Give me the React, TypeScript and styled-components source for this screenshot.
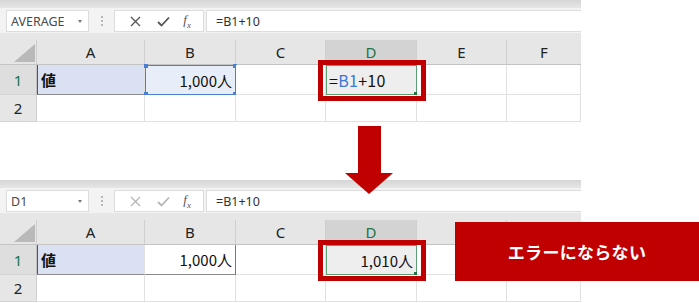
import React from 'react';
import styled, { createGlobalStyle } from 'styled-components';

const GlobalStyle = createGlobalStyle`
  html, body {
    margin: 0;
    padding: 0;
    background: #fff;
  }
  body {
    font-family: 'Noto Sans CJK JP', 'Liberation Sans', sans-serif;
  }
  * {
    box-sizing: border-box;
  }
`;

const Page = styled.div`
  position: relative;
  width: 699px;
  height: 303px;
  overflow: hidden;
  display: flex;
  flex-direction: column;
  gap: 58px;
`;

const Sheet = styled.div`
  width: 581px;
  display: flex;
  flex-direction: column;
`;

const TopBand = styled.div`
  height: 8px;
  background: linear-gradient(#d6d6d6, #e6e6e6);
`;

const FormulaRow = styled.div`
  height: 25px;
  background: #f3f3f3;
  display: flex;
  align-items: flex-start;
  padding-top: 2px;
`;

const NameBox = styled.div`
  margin-left: 6px;
  width: 83px;
  height: 22px;
  background: #fff;
  border: 1px solid #dcdcdc;
  display: flex;
  align-items: center;
  padding-left: 4px;
  font-family: 'Noto Sans', 'Liberation Sans', sans-serif;
  font-size: 12.5px;
  color: #4a4a4a;
  position: relative;
`;

const DropArrow = styled.span`
  position: absolute;
  right: 6px;
  top: 9px;
  width: 0;
  height: 0;
  border-left: 2.5px solid transparent;
  border-right: 2.5px solid transparent;
  border-top: 3px solid #777;
`;

const Grip = styled.div`
  width: 25px;
  height: 22px;
  display: flex;
  flex-direction: column;
  align-items: center;
  justify-content: center;
  gap: 2px;
  span {
    width: 2px;
    height: 2px;
    background: #b8b8b8;
  }
`;

const ButtonsBox = styled.div`
  width: 90px;
  height: 22px;
  background: #fff;
  border: 1px solid #dcdcdc;
  display: flex;
  align-items: center;
  justify-content: space-around;
  padding: 0 6px;
`;

const IconBtn = styled.span<{ $dim?: boolean }>`
  width: 16px;
  display: flex;
  justify-content: center;
  color: ${p => (p.$dim ? '#b5b5b5' : '#555')};
`;

const Fx = styled.span`
  font-family: 'Liberation Serif', serif;
  font-style: italic;
  font-size: 13px;
  color: #555;
  sub {
    font-size: 9px;
  }
`;

const FormulaInput = styled.div`
  margin-left: 2px;
  flex: 1;
  height: 22px;
  background: #fff;
  border: 1px solid #dcdcdc;
  border-right: none;
  display: flex;
  align-items: center;
  padding-left: 9px;
  font-family: 'Noto Sans', 'Liberation Sans', sans-serif;
  font-size: 12.5px;
  color: #333;
`;

const HeaderGap = styled.div`
  height: 7px;
  background: #e6e6e6;
`;

const Grid = styled.div`
  display: grid;
  grid-template-columns: 37px 108px 91px 90px 91px 90px 74px;
  grid-template-rows: 25px 30px 27px;
`;

const Corner = styled.div`
  background: #e6e6e6;
  border-right: 1px solid #cfcfcf;
  border-bottom: 1px solid #c4c4c4;
  position: relative;
  &::after {
    content: '';
    position: absolute;
    left: 14px;
    top: 4px;
    width: 21px;
    height: 18px;
    background: #b9b9b9;
    clip-path: polygon(100% 0, 100% 100%, 0 100%);
  }
`;

const ColHead = styled.div<{ $active?: boolean; $last?: boolean }>`
  background: ${p => (p.$active ? '#d3d3d3' : '#e6e6e6')};
  border-right: ${p => (p.$last ? 'none' : '1px solid #cfcfcf')};
  border-bottom: 1px solid ${p => (p.$active ? '#8fb59b' : '#c4c4c4')};
  display: flex;
  align-items: center;
  justify-content: center;
  font-family: 'Noto Sans', 'Liberation Sans', sans-serif;
  font-size: 15px;
  color: ${p => (p.$active ? '#217346' : '#222')};
`;

const RowHead = styled.div<{ $active?: boolean }>`
  background: ${p => (p.$active ? '#dedede' : '#e6e6e6')};
  border-right: 1px solid ${p => (p.$active ? '#c4c4c4' : '#cfcfcf')};
  border-bottom: 1px solid #d4d4d4;
  display: flex;
  align-items: center;
  justify-content: center;
  font-family: 'Noto Sans', 'Liberation Sans', sans-serif;
  font-size: 15px;
  color: ${p => (p.$active ? '#217346' : '#222')};
`;

const Cell = styled.div<{ $bg?: string; $align?: 'left' | 'right' }>`
  position: relative;
  background: ${p => p.$bg || '#fff'};
  border-right: 1px solid #e1e1e1;
  border-bottom: 1px solid #e1e1e1;
  display: flex;
  align-items: center;
  justify-content: ${p => (p.$align === 'right' ? 'flex-end' : 'flex-start')};
  padding: 0 3px;
  font-size: 15px;
  color: #111;
`;

const ValueCell = styled(Cell)`
  border-bottom: 1px solid #8a8a8a;
  border-left: 1px solid #217346;
  font-weight: bold;
`;

const AmountCell = styled(Cell)<{ $selected?: boolean }>`
  border: ${p => (p.$selected ? '1px solid #4a7fd6' : 'none')};
  border-right: 1px solid ${p => (p.$selected ? '#4a7fd6' : '#7a7a7a')};
  border-bottom: 1px solid ${p => (p.$selected ? '#4a7fd6' : '#8a8a8a')};
`;

const Handle = styled.span<{ $color: string; $pos: 'tl' | 'tr' | 'bl' | 'br' }>`
  position: absolute;
  width: 4px;
  height: 4px;
  background: ${p => p.$color};
  ${p => (p.$pos[0] === 't' ? 'top: -2px;' : 'bottom: -2px;')}
  ${p => (p.$pos[1] === 'l' ? 'left: -2px;' : 'right: -2px;')}
`;

const ActiveCell = styled(Cell)`
  background: #eeeeee;
  border: 1px solid #5e9c73;
  padding: 0 3px 0 2px;
`;

const FormulaText = styled.span`
  font-size: 16px;
  letter-spacing: 0.3px;
`;

const RedFrame = styled.span`
  position: absolute;
  z-index: 2;
  left: -9px;
  top: -6px;
  right: -10px;
  bottom: -7px;
  border: 5px solid #c00000;
`;

const Ref = styled.span`
  color: #3a78d8;
`;

const Arrow = styled.svg`
  position: absolute;
  left: 345px;
  top: 126px;
  z-index: 3;
`;

const Label = styled.div`
  position: absolute;
  z-index: 3;
  left: 455px;
  top: 222px;
  width: 244px;
  height: 59px;
  background: #c00000;
  display: flex;
  align-items: center;
  justify-content: center;
  color: #fff;
  font-weight: bold;
  font-size: 17px;
  letter-spacing: 0.3px;
`;

const CloseIcon = () => (
  <svg width="11" height="11" viewBox="0 0 11 11">
    <path d="M1 1L10 10M10 1L1 10" stroke="currentColor" strokeWidth="1.3" fill="none" />
  </svg>
);

const CheckIcon = () => (
  <svg width="13" height="11" viewBox="0 0 13 11">
    <path d="M1 6L4.5 9.5L12 1.5" stroke="currentColor" strokeWidth="1.8" fill="none" />
  </svg>
);

type SheetProps = {
  name: string;
  dimIcons?: boolean;
  editing?: boolean;
  hiddenCols?: string[];
};

const SheetView: React.FC<SheetProps> = ({ name, dimIcons, editing, hiddenCols = [] }) => {
  const cols = ['A', 'B', 'C', 'D', 'E', 'F'];
  return (
    <Sheet>
      <TopBand />
      <FormulaRow>
        <NameBox>
          {name}
          <DropArrow />
        </NameBox>
        <Grip>
          <span />
          <span />
          <span />
        </Grip>
        <ButtonsBox>
          <IconBtn $dim={dimIcons}>
            <CloseIcon />
          </IconBtn>
          <IconBtn $dim={dimIcons}>
            <CheckIcon />
          </IconBtn>
          <Fx>
            f<sub>x</sub>
          </Fx>
        </ButtonsBox>
        <FormulaInput>=B1+10</FormulaInput>
      </FormulaRow>
      <HeaderGap />
      <Grid>
        <Corner />
        {cols.map(c => (
          <ColHead key={c} $active={c === 'D'} $last={c === 'F'}>
            {hiddenCols.includes(c) ? null : c}
          </ColHead>
        ))}

        <RowHead $active>1</RowHead>
        <ValueCell $bg="#d9e1f2">値</ValueCell>
        <AmountCell $align="right" $bg={editing ? '#e8eef9' : '#fff'} $selected={editing}>
          1,000人
          {editing && (
            <>
              <Handle $color="#4a7fd6" $pos="tl" />
              <Handle $color="#4a7fd6" $pos="tr" />
              <Handle $color="#4a7fd6" $pos="bl" />
              <Handle $color="#4a7fd6" $pos="br" />
            </>
          )}
        </AmountCell>
        <Cell />
        <ActiveCell $align={editing ? 'left' : 'right'}>
          {editing ? (
            <FormulaText>
              =<Ref>B1</Ref>+10
            </FormulaText>
          ) : (
            '1,010人'
          )}
          <Handle $color="#217346" $pos="br" />
          <RedFrame />
        </ActiveCell>
        <Cell />
        <Cell />

        <RowHead>2</RowHead>
        <Cell />
        <Cell />
        <Cell />
        <Cell />
        <Cell />
        <Cell />
      </Grid>
    </Sheet>
  );
};

export default function App() {
  return (
    <>
      <GlobalStyle />
      <Page>
        <SheetView name="AVERAGE" editing />
        {/* the label below covers the F header of the second sheet */}
        <SheetView name="D1" dimIcons hiddenCols={['F']} />
        <Arrow width="48" height="68" viewBox="0 0 48 68">
          <polygon points="13,0 36,0 36,47 48,47 24,68 0,47 13,47" fill="#c00000" />
        </Arrow>
        <Label>エラーにならない</Label>
      </Page>
    </>
  );
}
